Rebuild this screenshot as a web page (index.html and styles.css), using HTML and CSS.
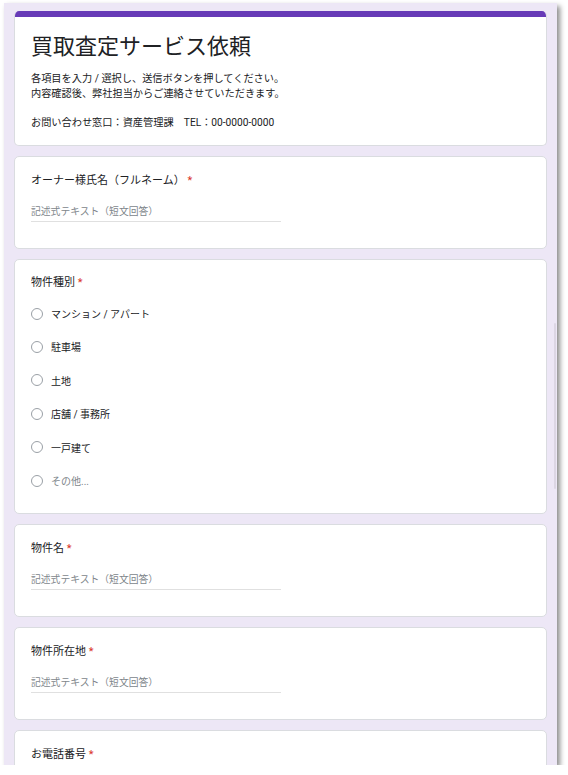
FILE: index.html
```html
<!DOCTYPE html>
<html lang="ja">
<head>
    <meta charset="UTF-8">
    <meta name="viewport" content="width=device-width, initial-scale=1.0">
    <title>買取査定サービス依頼</title>
    <link rel="stylesheet" href="styles.css">
</head>
<body>
<div class="window">
    <div class="scroll-thumb"></div>

    <div class="card header-card">
        <div class="accent"></div>
        <div class="header-body">
            <h1>買取査定サービス依頼</h1>
            <p class="description">各項目を入力 / 選択し、送信ボタンを押してください。<br>内容確認後、弊社担当からご連絡させていただきます。<br><br>お問い合わせ窓口：資産管理課　TEL：00-0000-0000</p>
        </div>
    </div>

    <div class="card question">
        <div class="q-title">オーナー様氏名（フルネーム） <span class="required">*</span></div>
        <div class="text-input">記述式テキスト（短文回答）</div>
    </div>

    <div class="card question radio-question">
        <div class="q-title">物件種別 <span class="required">*</span></div>
        <div class="options">
            <div class="option"><span class="radio"></span><span>マンション / アパート</span></div>
            <div class="option"><span class="radio"></span><span>駐車場</span></div>
            <div class="option"><span class="radio"></span><span>土地</span></div>
            <div class="option"><span class="radio"></span><span>店舗 / 事務所</span></div>
            <div class="option"><span class="radio"></span><span>一戸建て</span></div>
            <div class="option other"><span class="radio"></span><span>その他...</span></div>
        </div>
    </div>

    <div class="card question">
        <div class="q-title">物件名 <span class="required">*</span></div>
        <div class="text-input">記述式テキスト（短文回答）</div>
    </div>

    <div class="card question">
        <div class="q-title">物件所在地 <span class="required">*</span></div>
        <div class="text-input">記述式テキスト（短文回答）</div>
    </div>

    <div class="card question">
        <div class="q-title">お電話番号 <span class="required">*</span></div>
    </div>
</div>
</body>
</html>
```

FILE: styles.css
```css
body {
    margin: 0;
    padding: 0;
    background-color: #ffffff;
    font-family: Roboto, "Noto Sans CJK JP", sans-serif;
    color: #202124;
}

.window {
    position: relative;
    width: 553px;
    height: 762px;
    margin: 3px 0 0 4px;
    padding: 8px 10px 0 10px;
    box-sizing: border-box;
    background-color: #ede7f6;
    overflow: hidden;
    box-shadow: 3px 3px 5px rgba(0, 0, 0, 0.45);
    display: flex;
    flex-direction: column;
    gap: 9.7px;
}

/* faint scrollbar thumb on the right edge */
.scroll-thumb {
    position: absolute;
    top: 320px;
    right: 1px;
    width: 2px;
    height: 166px;
    background-color: rgba(0, 0, 0, 0.07);
    border-radius: 1px;
}

.card {
    flex-shrink: 0;
    background-color: #fff;
    border: 1px solid #dadce0;
    border-radius: 5px;
}

.header-card {
    border-top: none;
    overflow: hidden;
}

.accent {
    height: 6px;
    background-color: #673ab7;
}

.header-body {
    padding: 16px 16px 15px 16px;
}

h1 {
    margin: 0;
    font-size: 22px;
    font-weight: 400;
    line-height: 28px;
}

.description {
    margin: 11px 0 0 0;
    font-size: 10.2px;
    line-height: 14.5px;
}

.question {
    padding: 16px 16px 26.5px 16px;
}

.q-title {
    font-size: 11px;
    line-height: 16px;
}

.required {
    color: #d93025;
}

.text-input {
    width: 250px;
    margin-top: 14px;
    font-size: 9.8px;
    line-height: 18px;
    color: #80868b;
    border-bottom: 1px solid #e0e0e0;
}

.radio-question {
    padding-top: 15px;
    padding-bottom: 15.6px;
}

.options {
    margin-top: 6px;
}

.option {
    display: flex;
    align-items: center;
    height: 33.4px;
    font-size: 10px;
}

.radio {
    width: 10px;
    height: 10px;
    border: 1.3px solid #9aa0a6;
    border-radius: 50%;
    margin-right: 8px;
    flex-shrink: 0;
}

.option.other {
    color: #80868b;
}
```
